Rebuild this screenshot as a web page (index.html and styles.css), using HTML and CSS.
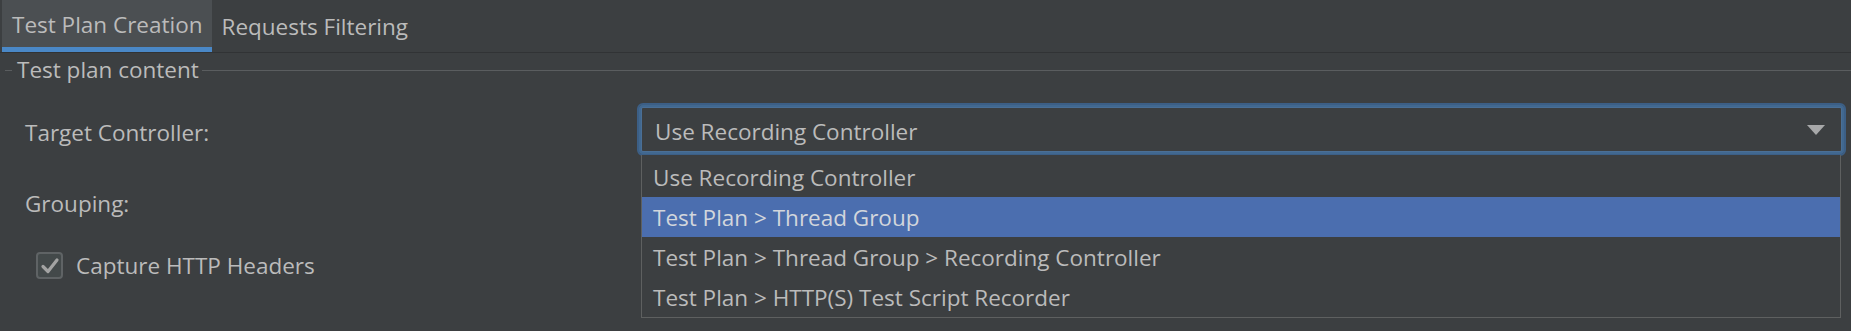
FILE: index.html
```html
<!DOCTYPE html>
<html>
<head>
<meta charset="utf-8">
<link rel="stylesheet" href="styles.css">
</head>
<body>
<div class="tabs">
  <div class="tab active">Test Plan Creation</div>
  <div class="tab">Requests Filtering</div>
</div>
<div class="group">
  <div class="legend">
    <span class="dash"></span>
    <span class="legend-text">Test plan content</span>
    <span class="rule"></span>
  </div>
  <div class="form">
    <div class="label">Target Controller:</div>
    <div class="combo-wrap">
      <div class="combo">
        <span class="combo-value">Use Recording Controller</span>
        <svg class="arrow" width="18" height="10" viewBox="0 0 18 10"><polygon points="0,0 18,0 9,10" fill="#a7a8a9"/></svg>
      </div>
      <ul class="popup">
        <li class="item">Use Recording Controller</li>
        <li class="item selected">Test Plan &gt; Thread Group</li>
        <li class="item">Test Plan &gt; Thread Group &gt; Recording Controller</li>
        <li class="item">Test Plan &gt; HTTP(S) Test Script Recorder</li>
      </ul>
    </div>
    <div class="label">Grouping:</div>
    <div class="combo-slot"></div>
  </div>
  <label class="check">
    <span class="box">
      <svg width="20" height="18" viewBox="0 0 20 18"><polyline points="3,9.5 8,14.5 17,3" fill="none" stroke="#a3a3a3" stroke-width="3.2" stroke-linecap="round" stroke-linejoin="round"/></svg>
    </span>
    <span class="check-text">Capture HTTP Headers</span>
  </label>
</div>
</body>
</html>
```

FILE: styles.css
```css
html, body {
  margin: 0;
  padding: 0;
  background: #3c3f41;
  width: 1851px;
  height: 331px;
  overflow: hidden;
  font-family: "Open Sans", "Noto Sans", sans-serif;
  font-size: 22.5px;
  color: #bbbbbb;
}

.tabs {
  display: flex;
  height: 52px;
  padding-left: 2px;
  border-bottom: 1px solid #313335;
}

.tab {
  display: flex;
  align-items: center;
  padding: 0 9px 0 10px;
  box-sizing: border-box;
  height: 52px;
  white-space: nowrap;
}

.tab.active {
  background: #4b4f52;
  border-bottom: 5px solid #4a88c7;
  padding-top: 2px;
}

.group {
  display: flex;
  flex-direction: column;
}

.legend {
  display: flex;
  align-items: center;
  height: 34px;
  padding-left: 5px;
}

.dash {
  width: 7px;
  height: 1px;
  background: #5a5d5f;
}

.legend-text {
  padding: 0 3px 0 5px;
  line-height: 1;
}

.rule {
  flex: 1;
  height: 1px;
  background: #5a5d5f;
}

.form {
  display: grid;
  grid-template-columns: 612px 1fr;
  grid-auto-rows: 53px;
  row-gap: 18px;
  margin-top: 16px;
  padding: 0 5px 0 25px;
}

.label {
  display: flex;
  align-items: center;
  padding-top: 6px;
}

.combo-wrap {
  position: relative;
}

.combo {
  height: 53px;
  box-sizing: border-box;
  border: 2px solid #3c5f86;
  border-radius: 6px;
  box-shadow: inset 0 0 0 2px #416890, inset 0 0 0 3px #4a6f96;
  display: flex;
  align-items: center;
  padding: 3px 19px 0 16px;
}

.combo-value {
  flex: 1;
  white-space: nowrap;
}

.arrow {
  display: block;
  margin-top: -3px;
}

.popup {
  position: absolute;
  left: 4px;
  right: 5px;
  top: 52px;
  margin: 0;
  padding: 0;
  list-style: none;
  background: #3c3f41;
  border: 1px solid #5e6060;
  border-top: 0;
  z-index: 2;
}

.item {
  height: 40px;
  display: flex;
  align-items: center;
  padding-left: 11px;
  white-space: nowrap;
}

.item:first-child {
  height: 42px;
  padding-top: 3px;
  box-sizing: border-box;
}

.item.selected {
  background: #4b6eaf;
  color: #d2d6dc;
}

.check {
  display: flex;
  align-items: center;
  margin-top: 25px;
  padding-left: 36px;
  height: 27px;
}

.box {
  width: 27px;
  height: 27px;
  box-sizing: border-box;
  border: 2px solid #5f6365;
  border-radius: 4px;
  background: #43494a;
  display: flex;
  align-items: center;
  justify-content: center;
}

.box svg {
  display: block;
}

.check-text {
  margin-left: 13px;
  white-space: nowrap;
}
```
